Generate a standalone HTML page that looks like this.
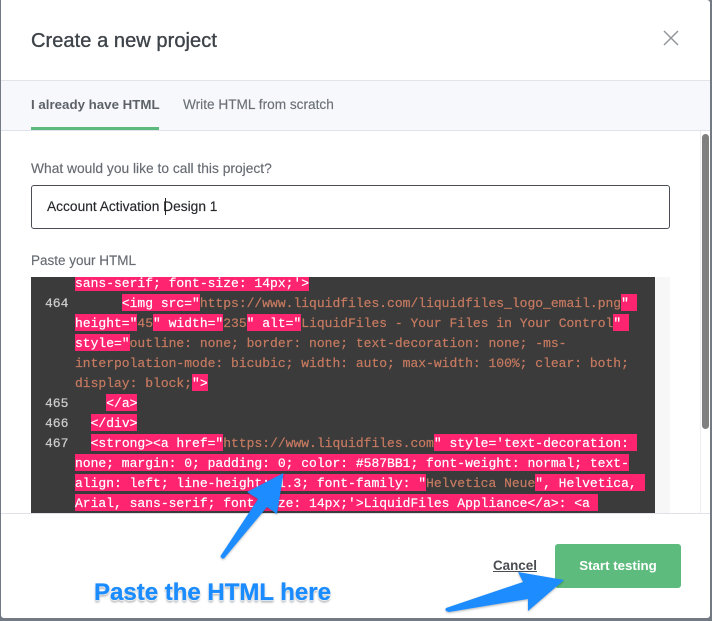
<!DOCTYPE html>
<html>
<head>
<meta charset="utf-8">
<style>
html,body{margin:0;padding:0;width:712px;height:621px;overflow:hidden;background:#747a84;}
*{box-sizing:border-box;}
body{position:relative;font-family:"Liberation Sans",sans-serif;}
.a{position:absolute;white-space:pre;}
#modal{position:absolute;left:1px;top:0;width:709px;height:618px;background:#fff;border-radius:0 3px 3px 3px;}
#tabs{position:absolute;left:1px;top:80px;width:709px;height:51px;background:#f7f8fc;border-top:1px solid #e2e4ea;border-bottom:1px solid #dfe2ec;}
#code{position:absolute;left:31px;top:277px;width:624px;height:236px;background:#3b3b3b;overflow:hidden;}
#gutter{position:absolute;left:655px;top:277px;width:15px;height:236px;background:#f7f7f7;}
.l{position:absolute;left:44px;height:17px;font:13px/19px "Liberation Mono",monospace;color:#c67a60;white-space:pre;-webkit-text-stroke:.2px;}
.n{position:absolute;left:14px;height:17px;font:13px/19px "Liberation Mono",monospace;color:#cfcfcf;white-space:pre;-webkit-text-stroke:.2px;}
.h{background:#ff2470;color:#fff;display:inline-block;height:17px;}
.lb{-webkit-text-stroke:.15px;}
</style>
</head>
<body>
<div id="modal"></div>
<div class="a" style="left:31px;top:29px;font-size:20px;line-height:24px;color:#3d4349;letter-spacing:.07px;-webkit-text-stroke:.35px;">Create a new project</div>
<svg class="a" style="left:662px;top:29px" width="18" height="18" viewBox="0 0 18 18"><path d="M2 2 L16 16 M16 2 L2 16" stroke="#8f9296" stroke-width="1.4" fill="none"/></svg>
<div id="tabs"></div>
<div class="a" style="left:31px;top:96px;font-size:13.3px;font-weight:bold;line-height:18px;color:#5d6269;">I already have HTML</div>
<div class="a lb" style="left:183px;top:96px;font-size:13.65px;line-height:18px;color:#6b7077;">Write HTML from scratch</div>
<div class="a" style="left:31px;top:127px;width:128px;height:3px;background:#5cbb7c;"></div>
<div class="a lb" style="left:31px;top:160px;font-size:13.8px;line-height:18px;color:#666b72;">What would you like to call this project?</div>
<div class="a" style="left:31px;top:185px;width:639px;height:44px;border:1px solid #4a4d55;border-radius:3px;background:#fff;"></div>
<div class="a lb" style="left:47px;top:198px;font-size:13.75px;line-height:18px;color:#26282c;">Account Activation Design 1</div>
<div class="a" style="left:165px;top:198px;width:1px;height:17px;background:#222;"></div>
<div class="a lb" style="left:31px;top:252px;font-size:13.5px;line-height:18px;color:#666b72;">Paste your HTML</div>
<div id="gutter"></div>
<div id="code">
<div class="l" style="top:-3px"><span class="h">sans-serif; font-size: 14px;'&gt;</span></div>
<div class="n" style="top:17px">464</div>
<div class="l" style="top:17px">      <span class="h">&lt;img src="</span>https://www.liquidfiles.com/liquidfiles_logo_email.png<span class="h">" </span></div>
<div class="l" style="top:37px"><span class="h">height="</span>45<span class="h">" width="</span>235<span class="h">" alt="</span>LiquidFiles - Your Files in Your Control<span class="h">" </span></div>
<div class="l" style="top:57px"><span class="h">style="</span>outline: none; border: none; text-decoration: none; -ms-</div>
<div class="l" style="top:77px">interpolation-mode: bicubic; width: auto; max-width: 100%; clear: both;</div>
<div class="l" style="top:97px">display: block;<span class="h">"&gt;</span></div>
<div class="n" style="top:117px">465</div>
<div class="l" style="top:117px">    <span class="h">&lt;/a&gt;</span></div>
<div class="n" style="top:137px">466</div>
<div class="l" style="top:137px">  <span class="h">&lt;/div&gt;</span></div>
<div class="n" style="top:157px">467</div>
<div class="l" style="top:157px">  <span class="h">&lt;strong&gt;&lt;a href="</span>https://www.liquidfiles.com<span class="h">" style='text-decoration: </span></div>
<div class="l" style="top:177px"><span class="h">none; margin: 0; padding: 0; color: #587BB1; font-weight: normal; text-</span></div>
<div class="l" style="top:197px"><span class="h">align: left; line-height: 1.3; font-family: "</span>Helvetica Neue<span class="h">", Helvetica, </span></div>
<div class="l" style="top:217px"><span class="h">Arial, sans-serif; font-size: 14px;'&gt;LiquidFiles Appliance&lt;/a&gt;: &lt;a </span></div>
</div>
<div class="a" style="left:700px;top:131px;width:1px;height:382px;background:#eeeeee;"></div>
<div class="a" style="left:702px;top:134px;width:7px;height:295px;background:#808080;border-radius:3.5px;"></div>
<div class="a" style="left:1px;top:513px;width:709px;height:1px;background:#e0e2ea;"></div>
<div class="a" style="left:493px;top:557px;font-size:13.4px;font-weight:bold;line-height:17px;color:#4a4d52;text-decoration:underline;">Cancel</div>
<div class="a" style="left:555px;top:544px;width:126px;height:44px;background:#5dbb7d;border-radius:3px;color:#fff;font-size:13.3px;font-weight:bold;line-height:43px;text-align:center;">Start testing</div>
<svg class="a" style="left:0;top:0" width="712" height="621" viewBox="0 0 712 621">
<defs><filter id="s" x="-20%" y="-20%" width="140%" height="140%"><feDropShadow dx="0" dy="1" stdDeviation="1" flood-color="#000" flood-opacity=".3"/></filter></defs>
<path d="M220.5 556 L258 499 L247 492 L283.5 473 L277 514 L267 507 L224 558.5 Q221 559 220.5 556 Z" fill="#1a8cff" filter="url(#s)"/>
<path d="M446 608 L523 582 L518 572 L564 580 L528 611 L528 599 L449 612 Q444 611 446 608 Z" fill="#1a8cff" filter="url(#s)"/>
</svg>
<div class="a" style="left:94px;top:578px;font-size:24px;font-weight:bold;line-height:30px;color:#1a8cff;-webkit-text-stroke:.3px #1a8cff;text-shadow:0 0 2px #fff,0 1px 1px #fff,0 2px 2px rgba(0,0,0,.45);">Paste the HTML here</div>
</body>
</html>
